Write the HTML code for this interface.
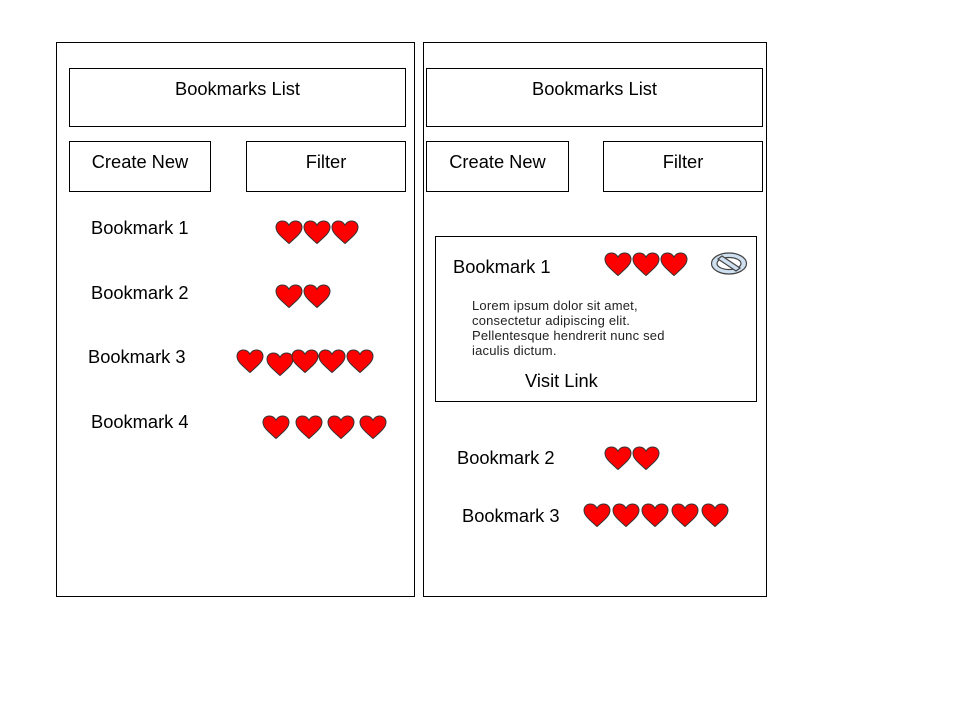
<!DOCTYPE html>
<html><head><style>
body{margin:0;width:960px;height:720px;background:#fff;position:relative;overflow:hidden;font-family:"Liberation Sans",Arial,sans-serif;color:#000}
.b{position:absolute;border:1px solid #000;box-sizing:border-box}
.t{position:absolute;font-size:18.3px;white-space:nowrap;line-height:20px}
.c{text-align:center}
svg{position:absolute;left:0;top:0}
</style></head><body>
<div class="b" style="left:56px;top:42px;width:359px;height:555px"></div>
<div class="b" style="left:423px;top:42px;width:344px;height:555px"></div>
<div class="b" style="left:69px;top:68px;width:337px;height:59px"></div>
<div class="b" style="left:426px;top:68px;width:337px;height:59px"></div>
<div class="b" style="left:69px;top:141px;width:142px;height:51px"></div>
<div class="b" style="left:246px;top:141px;width:160px;height:51px"></div>
<div class="b" style="left:426px;top:141px;width:143px;height:51px"></div>
<div class="b" style="left:603px;top:141px;width:160px;height:51px"></div>
<div class="b" style="left:435px;top:236px;width:322px;height:166px"></div>

<div class="t c" style="left:69px;top:79px;width:337px">Bookmarks List</div>
<div class="t c" style="left:426px;top:79px;width:337px">Bookmarks List</div>
<div class="t c" style="left:69px;top:152px;width:142px">Create New</div>
<div class="t c" style="left:246px;top:152px;width:160px">Filter</div>
<div class="t c" style="left:426px;top:152px;width:143px">Create New</div>
<div class="t c" style="left:603px;top:152px;width:160px">Filter</div>
<div class="t" style="left:91px;top:218px">Bookmark 1</div>
<div class="t" style="left:91px;top:283px">Bookmark 2</div>
<div class="t" style="left:88px;top:347px">Bookmark 3</div>
<div class="t" style="left:91px;top:412px">Bookmark 4</div>
<div class="t" style="left:453px;top:257px">Bookmark 1</div>
<div class="t" style="left:457px;top:448px">Bookmark 2</div>
<div class="t" style="left:462px;top:506px">Bookmark 3</div>
<div class="t" style="left:525px;top:371px">Visit Link</div>
<div style="position:absolute;left:472px;top:298px;font-size:13px;line-height:15px;letter-spacing:0.2px;color:#222">Lorem ipsum dolor sit amet,<br>consectetur adipiscing elit.<br>Pellentesque hendrerit nunc sed<br>iaculis dictum.</div>

<svg width="960" height="720">
<defs><path id="h" d="M14 23.5C6 16.5 1 12.5 1 7.2 1 3.5 3.8 1 7.3 1 10.3 1 12.8 2.8 14 5.2 15.2 2.8 17.7 1 20.7 1 24.2 1 27 3.5 27 7.2 27 12.5 22 16.5 14 23.5Z" fill="#f00" stroke="#333" stroke-width="1"/></defs>
<use href="#h" x="275" y="220"/><use href="#h" x="303" y="220"/><use href="#h" x="331" y="220"/>
<use href="#h" x="275" y="284"/><use href="#h" x="303" y="284"/>
<use href="#h" x="236" y="349"/><use href="#h" x="266" y="352"/><use href="#h" x="291" y="349"/><use href="#h" x="318" y="349"/><use href="#h" x="346" y="349"/>
<use href="#h" x="262" y="415"/><use href="#h" x="295" y="415"/><use href="#h" x="327" y="415"/><use href="#h" x="359" y="415"/>
<use href="#h" x="604" y="252"/><use href="#h" x="632" y="252"/><use href="#h" x="660" y="252"/>
<use href="#h" x="604" y="446"/><use href="#h" x="632" y="446"/>
<use href="#h" x="583" y="503"/><use href="#h" x="612" y="503"/><use href="#h" x="641" y="503"/><use href="#h" x="671" y="503"/><use href="#h" x="701" y="503"/>
<g stroke="#444" stroke-width="1.2">
<ellipse cx="729" cy="263.5" rx="17.5" ry="10.5" fill="#cfe0f0"/>
<ellipse cx="729" cy="263.5" rx="12" ry="6" fill="#fff"/>
<path d="M718 259 L722 256 L740 268 L736 271Z" fill="#cfe0f0"/>
</g>
</svg>
</body></html>
